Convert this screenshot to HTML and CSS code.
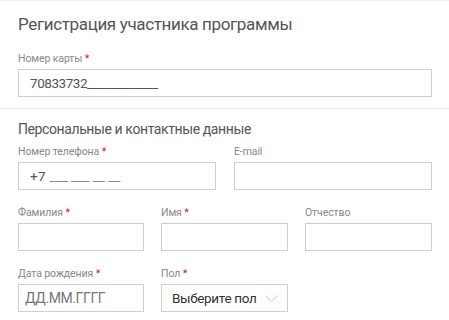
FILE: index.html
```html
<!DOCTYPE html>
<html lang="ru">
<head>
<meta charset="utf-8">
<link rel="stylesheet" href="styles.css">
</head>
<body>
<div class="page">
  <section class="block block-top">
    <h1 class="title">Регистрация участника программы</h1>
    <div class="field">
      <label class="label">Номер карты <span class="req">*</span></label>
      <div class="input"><span class="value">70833732<span class="mask">____________</span></span></div>
    </div>
  </section>
  <section class="block block-personal">
    <h2 class="subtitle">Персональные и контактные данные</h2>
    <div class="row row-2">
      <div class="field">
        <label class="label">Номер телефона <span class="req">*</span></label>
        <div class="input"><span class="value phone">+7 <span class="mask-light">___ ___ __ __</span></span></div>
      </div>
      <div class="field">
        <label class="label">E-mail</label>
        <div class="input"></div>
      </div>
    </div>
    <div class="row row-3">
      <div class="field">
        <label class="label">Фамилия <span class="req">*</span></label>
        <div class="input"></div>
      </div>
      <div class="field">
        <label class="label">Имя <span class="req">*</span></label>
        <div class="input"></div>
      </div>
      <div class="field">
        <label class="label">Отчество</label>
        <div class="input"></div>
      </div>
    </div>
    <div class="row row-3">
      <div class="field">
        <label class="label">Дата рождения <span class="req">*</span></label>
        <div class="input input-date"><span class="placeholder">ДД.ММ.ГГГГ</span></div>
      </div>
      <div class="field">
        <label class="label">Пол <span class="req">*</span></label>
        <div class="input input-select">
          <span class="select-text">Выберите пол</span>
          <svg class="chevron" width="13" height="7" viewBox="0 0 13 7"><path d="M0.5 0.5 L6.5 6.2 L12.5 0.5" fill="none" stroke="#c8c8c8" stroke-width="1"/></svg>
        </div>
      </div>
    </div>
  </section>
</div>
</body>
</html>
```
FILE: styles.css
```css
* { box-sizing: border-box; }
html, body { margin: 0; padding: 0; background: #fff; }
body {
  font-family: Roboto, "Noto Sans", Arial, sans-serif;
  color: #555;
  width: 449px;
  height: 320px;
  overflow: hidden;
}
.page {
  border-top: 1px solid #f1f1f1;
}
.block { padding: 0 17px 0 18px; }
.block-top {
  padding-top: 11px;
  padding-bottom: 11px;
  border-bottom: 1px solid #ebebeb;
}
.title {
  margin: 0 0 16px;
  font-size: 17px;
  line-height: 24px;
  font-weight: 400;
  letter-spacing: -0.35px;
  color: #555;
}
.subtitle {
  margin: 0 0 6px;
  font-size: 14px;
  line-height: 20px;
  font-weight: 400;
  letter-spacing: -0.4px;
  color: #555;
}
.block-personal { padding-top: 10px; }
.label {
  display: block;
  font-size: 10.5px;
  line-height: 14px;
  letter-spacing: -0.1px;
  color: #888;
  margin-bottom: 3px;
}
.req { color: #c4202e; }
.input {
  height: 28px;
  border: 1px solid #cfcfcf;
  background: #fff;
  display: flex;
  align-items: center;
  padding-left: 11px;
}
.value {
  font-size: 13.5px;
  letter-spacing: -0.45px;
  color: #555;
  white-space: pre;
}
.mask { letter-spacing: -0.2px; }
.phone { letter-spacing: 0.3px; }
.mask-light { color: #888; letter-spacing: 0; }
.placeholder {
  font-size: 14px;
  letter-spacing: -0.4px;
  color: #777;
}
.input-date { padding-left: 6px; }
.input-select {
  padding-right: 9px;
  padding-left: 10px;
}
.select-text {
  font-size: 13.5px;
  letter-spacing: -0.35px;
  color: #333;
}
.chevron { display: block; margin-left: auto; }
.row { display: grid; margin-bottom: 16px; }
.row-2 { grid-template-columns: 1fr 1fr; column-gap: 18px; }
.row-3 { grid-template-columns: 126px 127px 127px; column-gap: 17px; }
```
